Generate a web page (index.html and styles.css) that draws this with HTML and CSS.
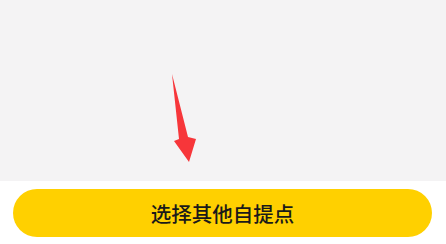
FILE: index.html
```html
<!DOCTYPE html>
<html lang="zh">
<head>
  <meta charset="UTF-8" />
  <meta name="viewport" content="width=device-width, initial-scale=1.0" />
  <title>自提点</title>
  <link rel="stylesheet" href="styles.css">
</head>
<body>
  <div class="map">
    <svg class="arrow" width="40" height="100" viewBox="0 0 40 100">
      <polygon points="2,4 9,69 4,71 19,92 26,69 18,67" fill="#f7363a"/>
    </svg>
  </div>
  <div class="footer">
    <button class="pickBtn" type="button">选择其他自提点</button>
  </div>
</body>
</html>
```

FILE: styles.css
```css
body {
  margin: 0;
  background: #ffffff;
  font-family: "Noto Sans CJK SC", "Noto Sans", sans-serif;
}
.map {
  position: relative;
  height: 181px;
  background: #f4f3f4;
}
.arrow {
  position: absolute;
  left: 170px;
  top: 70px;
}
.footer {
  padding: 8px 14px 0 13px;
}
.pickBtn {
  display: block;
  width: 100%;
  height: 48px;
  border: none;
  border-radius: 24px;
  background: #ffd000;
  color: #1a1a1a;
  font-family: inherit;
  font-size: 20.5px;
  font-weight: 500;
  cursor: pointer;
}
```
